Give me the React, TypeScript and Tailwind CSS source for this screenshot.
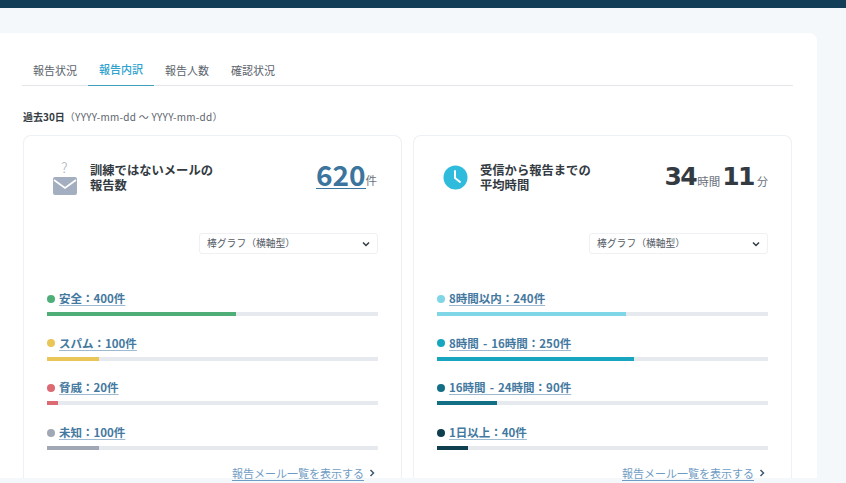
import React from 'react';

type Row = { label: string; color: string; width: string; dot: string };

const mailRows: Row[] = [
  { label: '安全：400件', color: 'bg-[#4fae78]', dot: 'bg-[#4fae78]', width: 'w-[57.2%]' },
  { label: 'スパム：100件', color: 'bg-[#eac558]', dot: 'bg-[#eac558]', width: 'w-[15.8%]' },
  { label: '脅威：20件', color: 'bg-[#dc6a72]', dot: 'bg-[#dc6a72]', width: 'w-[3.4%]' },
  { label: '未知：100件', color: 'bg-[#a1a8b5]', dot: 'bg-[#a1a8b5]', width: 'w-[15.8%]' },
];

const timeRows: Row[] = [
  { label: '8時間以内：240件', color: 'bg-[#7fd6e6]', dot: 'bg-[#7fd6e6]', width: 'w-[57.2%]' },
  { label: '8時間 - 16時間：250件', color: 'bg-[#18a5bf]', dot: 'bg-[#18a5bf]', width: 'w-[59.6%]' },
  { label: '16時間 - 24時間：90件', color: 'bg-[#136f86]', dot: 'bg-[#136f86]', width: 'w-[18%]' },
  { label: '1日以上：40件', color: 'bg-[#0f3f4e]', dot: 'bg-[#0f3f4e]', width: 'w-[9.4%]' },
];

function MailIcon() {
  return (
    <div className="flex w-[25px] flex-col items-center">
      <span className="text-[14px] font-light leading-[16px] text-[#a6aebb]">?</span>
      <svg width="24" height="18" viewBox="0 0 24 18" className="mt-[2px]">
        <rect width="24" height="18" rx="2" fill="#a3afc0" />
        <path d="M1 3 L12 11 L23 3" fill="none" stroke="#fff" strokeWidth="1.6" />
      </svg>
    </div>
  );
}

function ClockIcon() {
  return (
    <svg width="25" height="25" viewBox="0 0 25 25" className="translate-x-[1px]">
      <circle cx="12.5" cy="12.5" r="12" fill="#2fbcdc" />
      <path d="M12 6 V13 L17 17" fill="none" stroke="#fff" strokeWidth="2" strokeLinecap="round" strokeLinejoin="round" />
    </svg>
  );
}

function Chevron({ className }: { className: string }) {
  return (
    <svg width="8" height="8" viewBox="0 0 8 8" className={className}>
      <path d="M2.5 1 L5.5 4 L2.5 7" fill="none" stroke="currentColor" strokeWidth="1.5" />
    </svg>
  );
}

function Card({ icon, title, value, rows }: { icon: React.ReactNode; title: string[]; value: React.ReactNode; rows: Row[] }) {
  return (
    <div className="h-[343px] w-[379px] shrink-0 rounded-t-lg border border-b-0 border-[#edf0f4] bg-white px-[23px]">
      {/* header */}
      <div className="flex h-[80px] items-start justify-between pt-[23px]">
        <div className="flex items-center gap-[13px] pl-[5px]">
          <div className="flex h-[36px] w-[25px] items-center justify-center">{icon}</div>
          <div className="mt-[2px] text-[12.3px] font-bold text-[#333a42]">
            {title.map((line) => (
              <div key={line} className="h-[15.5px] leading-[15.5px]">{line}</div>
            ))}
          </div>
        </div>
        {value}
      </div>
      {/* select */}
      <div className="mt-[17px] flex justify-end">
        <div className="flex h-[21px] w-[179px] items-center justify-between rounded-[3px] border border-[#eef0f3] px-[7px] text-[9.8px] text-[#555c66]">
          <span>棒グラフ（横軸型）</span>
          <svg width="8" height="8" viewBox="0 0 8 8">
            <path d="M1 2.5 L4 5.5 L7 2.5" fill="none" stroke="#333a42" strokeWidth="1.5" />
          </svg>
        </div>
      </div>
      {/* rows */}
      <div className="mt-[36px] flex flex-col gap-[18.7px]">
        {rows.map((row) => (
          <div key={row.label}>
            <div className="flex h-[17px] items-center gap-[4px]">
              <span className={`h-[8px] w-[8px] rounded-full ${row.dot}`} />
              <span className="text-[11.5px] font-bold leading-[15px] text-[#44799f] underline decoration-[#9dbad0] underline-offset-2 [word-spacing:1.5px]">{row.label}</span>
            </div>
            <div className="mt-[5px] h-[4px] w-full bg-[#e6e9ee]">
              <div className={`h-full ${row.width} ${row.color}`} />
            </div>
          </div>
        ))}
      </div>
      {/* link */}
      <div className="mt-[17px] flex items-center justify-end gap-[4px] pr-[2px]">
        <span className="text-[11px] leading-[12px] text-[#6f9cc4] underline underline-offset-2">報告メール一覧を表示する</span>
        <Chevron className="text-[#3f5b73]" />
      </div>
    </div>
  );
}

export default function App() {
  const tabs = ['報告状況', '報告内訳', '報告人数', '確認状況'];
  return (
    <div className="h-[483px] w-[846px] overflow-hidden bg-[#f4f8fb] font-['Noto_Sans_CJK_JP','Noto_Sans',sans-serif]">
      <div className="h-[8px] bg-[#123f57]" />
      <div className="mt-[25px] h-[445px] w-[817px] rounded-tr-lg bg-white pl-[22px] pr-[24px]">
        {/* tabs */}
        <div className="flex h-[53px] items-end border-b border-[#e3e7eb]">
          {tabs.map((tab, i) => (
            <div
              key={tab}
              className={
                i === 1
                  ? 'mb-[-1px] flex h-[32px] w-[66px] items-center justify-center border-b border-[#3f9fbe] text-[11px] font-medium text-[#2fa3cd]'
                  : 'mb-[-1px] flex h-[32px] w-[66px] items-center justify-center text-[11px] text-[#5c636c]'
              }
            >
              {tab}
            </div>
          ))}
        </div>
        <div className="mt-[23px] flex h-[15px] items-center pl-[1px] text-[10px] text-[#5c636c]">
          <span className="font-bold text-[#333a42]">過去30日</span>
          <span className="tracking-[0.27px]">（YYYY-mm-dd ～ YYYY-mm-dd）</span>
        </div>
        <div className="mt-[11px] flex gap-[11px] pl-[1px]">
          <Card
            icon={<MailIcon />}
            title={['訓練ではないメールの', '報告数']}
            rows={mailRows}
            value={
              <div className="mt-[1px] flex items-end pr-[1px]">
                <span className="border-b border-[#3b759d] text-[28px] font-bold leading-[28px] text-[#3b759d]">620</span>
                <span className="mb-[1px] text-[11.5px] leading-[16px] text-[#6a717a]">件</span>
              </div>
            }
          />
          <Card
            icon={<ClockIcon />}
            title={['受信から報告までの', '平均時間']}
            rows={timeRows}
            value={
              <div className="mt-[3px] flex items-end text-[#333a42]">
                <span className="font-['DejaVu_Sans'] text-[25px] font-bold leading-[30px] tracking-[-1.5px]">34</span>
                <span className="mb-[3px] ml-[1px] text-[11.5px] leading-[16px] text-[#6a717a]">時間</span>
                <span className="ml-[2px] font-['DejaVu_Sans'] text-[25px] font-bold leading-[30px] tracking-[-1.5px]">11</span>
                <span className="mb-[3px] ml-[3px] text-[11px] leading-[16px] text-[#6a717a]">分</span>
              </div>
            }
          />
        </div>
      </div>
    </div>
  );
}
